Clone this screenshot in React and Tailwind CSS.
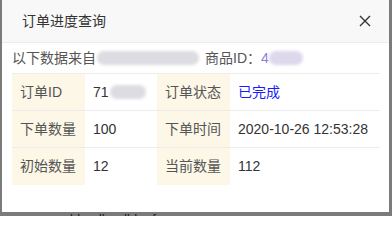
const rows = [
  [
    { label: "订单ID", value: "71", blur: true },
    { label: "订单状态", value: "已完成", link: true },
  ],
  [
    { label: "下单数量", value: "100" },
    { label: "下单时间", value: "2020-10-26 12:53:28" },
  ],
  [
    { label: "初始数量", value: "12" },
    { label: "当前数量", value: "112" },
  ],
]

const Blur = ({ className }) => (
  <span className={`inline-block h-[14px] rounded-full bg-[#dcdce2] blur-[1.5px] align-middle ${className}`} />
)

export default function App() {
  return (
    <div
      className="w-[392px] h-[216px] overflow-hidden bg-[#7b7b7b]"
      style={{ fontFamily: '"Liberation Sans", "Noto Sans CJK SC", sans-serif' }}
    >
      <div className="ml-[2px] w-[387px] h-[212px] bg-white">
        <div className="h-[43px] flex items-center justify-between pl-[20px] pr-[18px] bg-[#f8f8f8] border-b border-[#ececec]">
          <span className="text-[14px] text-[#333]">订单进度查询</span>
          <svg width="12" height="12" viewBox="0 0 12 12">
            <path d="M1 1 L11 11 M11 1 L1 11" stroke="#333" strokeWidth="1.4" />
          </svg>
        </div>
        <div className="px-[10px]">
          <div className="h-[30px] flex items-center text-[14px] text-[#555]">
            <span>以下数据来自</span>
            <Blur className="w-[102px] ml-[1px]" />
            <span className="ml-[6px]">商品ID：</span>
            <span className="text-[#8b7fd6]">4</span>
            <Blur className="w-[34px] bg-[#ddd8ec]" />
          </div>
          <div className="w-[368px] border-t border-[#ececec] text-[14px]">
            {rows.map((row, i) => (
              <div key={i} className={`flex h-[37px] ${i < rows.length - 1 ? "border-b border-[#ececec]" : ""}`}>
                {row.map((cell, j) => (
                  <div key={j} className="flex">
                    <div className="w-[73px] flex items-center pl-[8px] bg-[#fcf7e7] text-[#555]">{cell.label}</div>
                    <div
                      className={`${j === 0 ? "w-[72px]" : "w-[150px]"} flex items-center pl-[8px] ${cell.link ? "text-[#1a1aff]" : "text-[#333]"}`}
                    >
                      {cell.value}
                      {cell.blur && <Blur className="w-[36px] ml-[1px]" />}
                    </div>
                  </div>
                ))}
              </div>
            ))}
          </div>
        </div>
      </div>
      <div className="pl-[28px] text-[13px] leading-[14px] text-[#1e1e1e] whitespace-nowrap">
        nnnysnbkmdhmdhhmfn
      </div>
    </div>
  )
}
